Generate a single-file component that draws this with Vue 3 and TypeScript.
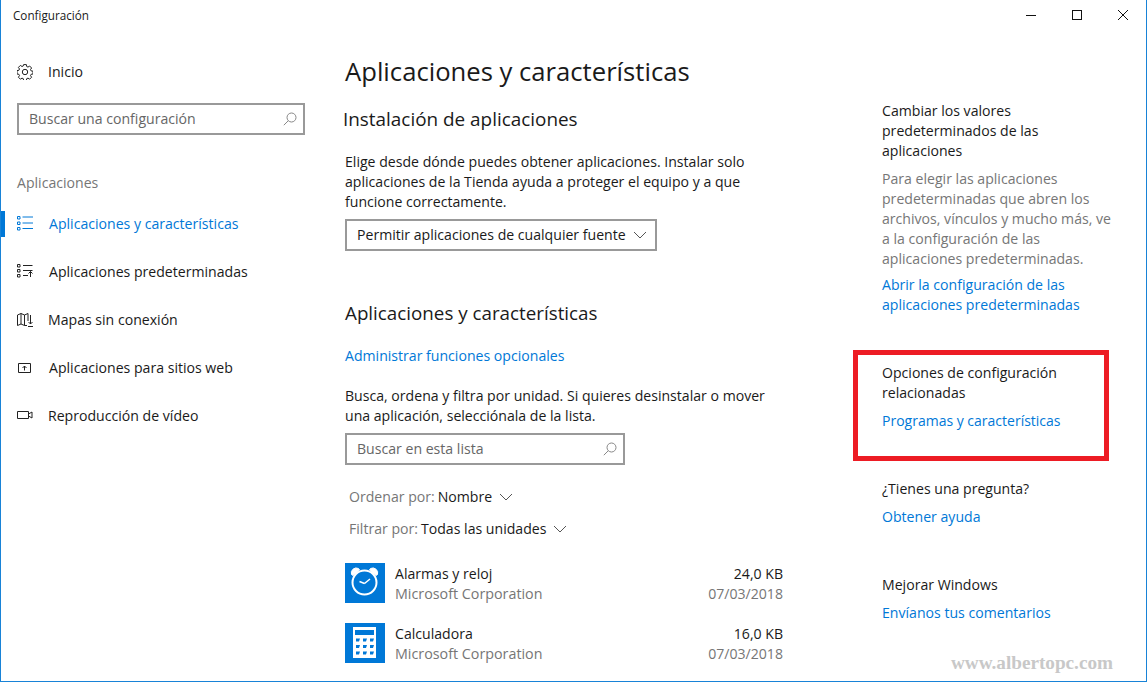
<script setup lang="ts">
const nav = [
  { label: 'Aplicaciones y características', icon: 'list', active: true, gap: 'wide' },
  { label: 'Aplicaciones predeterminadas', icon: 'defaults', active: false, gap: 'wide' },
  { label: 'Mapas sin conexión', icon: 'map', active: false, gap: 'narrow' },
  { label: 'Aplicaciones para sitios web', icon: 'web', active: false, gap: 'wide' },
  { label: 'Reproducción de vídeo', icon: 'video', active: false, gap: 'narrow' },
]
const apps = [
  { name: 'Alarmas y reloj', size: '24,0 KB', icon: 'clock' },
  { name: 'Calculadora', size: '16,0 KB', icon: 'calc' },
]
</script>

<template>
  <div class="window">
    <header class="titlebar">
      <span class="title">Configuración</span>
      <div class="controls">
        <svg width="12" height="12" viewBox="0 0 12 12" class="c1"><path d="M1 6.500h10" stroke="#111" fill="none" /></svg>
        <svg width="12" height="12" viewBox="0 0 12 12" class="c2"><rect x="1.500" y="1.500" width="9" height="9" stroke="#111" fill="none" /></svg>
        <svg width="12" height="12" viewBox="0 0 12 12" class="c3"><path d="M1 1l10 10M11 1L1 11" stroke="#111" fill="none" /></svg>
      </div>
    </header>

    <div class="body">
      <aside class="sidebar">
        <div class="home">
          <svg class="ico" width="16" height="16" viewBox="0 0 16 16" fill="none" stroke="#222" stroke-width="1">
            <circle cx="8" cy="8" r="2.700" />
            <path d="M6.600.6h2.800l.3 1.900 1.300.6 1.600-1.100 2 2-1.100 1.600.6 1.300 1.900.3v2.800l-1.900.3-.6 1.300 1.100 1.600-2 2-1.600-1.100-1.300.6-.3 1.900H6.600l-.3-1.900-1.300-.6-1.600 1.100-2-2 1.100-1.600-.6-1.300-1.900-.3V6.600l1.900-.3.6-1.300-1.100-1.600 2-2 1.600 1.100 1.300-.6z" />
          </svg>
          <span>Inicio</span>
        </div>
        <div class="search side-search">
          <span>Buscar una configuración</span>
          <svg width="14" height="14" viewBox="0 0 14 14" fill="none" stroke="#888"><circle cx="8.500" cy="5.500" r="4.500" /><path d="M5.200 8.800L.8 13.200" /></svg>
        </div>
        <div class="group">Aplicaciones</div>
        <nav class="nav">
          <div v-for="n in nav" :key="n.label" class="nav-row" :class="[{ active: n.active }, n.gap]">
            <svg class="nav-ico" width="16" height="16" viewBox="0 0 16 16" fill="none" :stroke="n.active ? '#0078d7' : '#222'">
              <template v-if="n.icon === 'list'">
                <path d="M.5.5h2.500V3H.5zM.5 6h2.500v2.500H.5zM.5 11.500h2.500V14H.5zM5.500 1h10.500M5.500 7h10.500M5.500 12.500h10.500" />
              </template>
              <template v-else-if="n.icon === 'defaults'">
                <path d="M.5.5h2.500V3H.5zM.5 5.500h2.500V8H.5zM.5 10.500h2.500V13H.5zM6 1.500h9.500M6 6.500h9.500M6 11.500h5M13.500 13V7.500M11.500 9.500l2-2 2 2" />
              </template>
              <template v-else-if="n.icon === 'map'">
                <path d="M.5 3l3.500-1.500L7.500 3 11 1.500V9M.5 3v10.500L4 12l3.500 1.500H10M4 1.500V12M7.500 3v10.500M13.500 3v9M11.500 10l2 2 2-2M11 14.500h5" />
              </template>
              <template v-else-if="n.icon === 'web'">
                <path d="M1.500 3.500h12v9h-12zM7.500 10.500V6M5.500 8l2-2 2 2" />
              </template>
              <template v-else>
                <path d="M.5 3.500h11v7H.5zM11.500 6l3.500-2v6l-3.500-2" />
              </template>
            </svg>
            <span>{{ n.label }}</span>
          </div>
        </nav>
      </aside>

      <main class="main">
        <h1>Aplicaciones y características</h1>
        <h2 class="install">Instalación de aplicaciones</h2>
        <p class="p1">Elige desde dónde puedes obtener aplicaciones. Instalar solo aplicaciones de la Tienda ayuda a proteger el equipo y a que funcione correctamente.</p>
        <div class="select">
          <span>Permitir aplicaciones de cualquier fuente</span>
          <svg width="14" height="8" viewBox="0 0 14 8" fill="none" stroke="#555"><path d="M1 1l6 6 6-6" /></svg>
        </div>
        <h2 class="features">Aplicaciones y características</h2>
        <a class="link manage">Administrar funciones opcionales</a>
        <p class="p2">Busca, ordena y filtra por unidad. Si quieres desinstalar o mover una aplicación, selecciónala de la lista.</p>
        <div class="search list-search">
          <span>Buscar en esta lista</span>
          <svg width="14" height="14" viewBox="0 0 14 14" fill="none" stroke="#888"><circle cx="8.500" cy="5.500" r="4.500" /><path d="M5.200 8.800L.8 13.200" /></svg>
        </div>
        <div class="filter order">
          <span class="muted">Ordenar por:</span> <span>Nombre</span>
          <svg width="14" height="8" viewBox="0 0 14 8" fill="none" stroke="#555"><path d="M1 1l6 6 6-6" /></svg>
        </div>
        <div class="filter by">
          <span class="muted">Filtrar por:</span> <span>Todas las unidades</span>
          <svg width="14" height="8" viewBox="0 0 14 8" fill="none" stroke="#555"><path d="M1 1l6 6 6-6" /></svg>
        </div>
        <div class="apps">
          <div v-for="a in apps" :key="a.name" class="app">
            <div class="app-icon">
              <svg v-if="a.icon === 'clock'" width="40" height="40" viewBox="0 0 40 40" fill="none" stroke="#fff">
                <circle cx="19.500" cy="19.500" r="12" stroke-width="2" />
                <path d="M6.500 11.500a5 5 0 0 1 7-6l1 1.500-6.500 5.500zM32.500 11.500a5 5 0 0 0-7-6l-1 1.500 6.500 5.500z" fill="#fff" />
                <path d="M19.500 20.500l5.500-4.500M19.500 20.500l-5-2" stroke-width="1.500" />
              </svg>
              <svg v-else width="40" height="40" viewBox="0 0 40 40">
                <path fill-rule="evenodd" fill="#fff" d="M8 4h23v31H8zM10 7v5h19V7zM11 15.500v3h3l1-3zM18 15.500v3h3l1-3zM25 15.500v3h3l1-3zM11 22v3h3l1-3zM18 22v3h3l1-3zM25 22v3h3l1-3zM11 28.500v3h3l1-3zM18 28.500v3h3l1-3zM25 28.500v3h3l1-3z" />
              </svg>
            </div>
            <div class="app-text">
              <div>{{ a.name }}</div>
              <div class="muted company">Microsoft Corporation</div>
            </div>
            <div class="app-meta">
              <div>{{ a.size }}</div>
              <div class="muted">07/03/2018</div>
            </div>
          </div>
        </div>
      </main>

      <aside class="right">
        <section class="defaults">
          <div class="narrow-head">Cambiar los valores predeterminados de las aplicaciones</div>
          <p class="muted">Para elegir las aplicaciones predeterminadas que abren los archivos, vínculos y mucho más, ve a la configuración de las aplicaciones predeterminadas.</p>
          <a class="link">Abrir la configuración de las aplicaciones predeterminadas</a>
        </section>
        <section class="related">
          <div>Opciones de configuración relacionadas</div>
          <a class="link">Programas y características</a>
          <div class="highlight"></div>
        </section>
        <section class="question">
          <div>¿Tienes una pregunta?</div>
          <a class="link">Obtener ayuda</a>
        </section>
        <section class="improve">
          <div>Mejorar Windows</div>
          <a class="link">Envíanos tus comentarios</a>
        </section>
      </aside>
    </div>
    <div class="watermark">www.albertopc.com</div>
  </div>
</template>

<style>
html, body { margin: 0; padding: 0; background: #fff; overflow: hidden; }
</style>

<style scoped>
.window {
  position: relative;
  box-sizing: border-box;
  width: 1147px;
  height: 682px;
  border: 1px solid #1883d7;
  border-top: 0;
  overflow: hidden;
  background: #fff;
  color: #1a1a1a;
  font-family: "Open Sans", "Noto Sans", sans-serif;
  font-size: 14.100px;
  line-height: 20px;
}
.titlebar { height: 30px; display: flex; align-items: center; justify-content: space-between; }
.title { font-size: 11.700px; margin-left: 12px; }
.controls { display: flex; align-items: center; margin-right: 17px; }
.c2 { margin-left: 34px; }
.c3 { margin-left: 34px; }
.body { display: flex; height: 651px; }
.sidebar { width: 344px; flex: none; }
.home { display: flex; align-items: center; height: 24px; margin: 30px 0 0 16px; }
.home span { margin-left: 15px; }
.ico { flex: none; }
.search {
  box-sizing: border-box;
  display: flex;
  align-items: center;
  justify-content: space-between;
  height: 32px;
  border: 2px solid #999;
  padding: 0 6px 0 10px;
  color: #666;
}
.side-search { width: 288px; margin: 19px 0 0 16px; }
.group { margin: 38px 0 0 16px; color: #767676; }
.nav { margin-top: 7px; }
.nav-row { position: relative; display: flex; align-items: center; height: 48px; padding-left: 16px; }
.nav-row.wide span { margin-left: 16px; }
.nav-row.narrow span { margin-left: 15px; }
.nav-ico { flex: none; }
.nav-row.active { color: #0078d7; }
.nav-row.active::before {
  content: "";
  position: absolute;
  left: 0;
  top: 11px;
  width: 4px;
  height: 26px;
  background: #0078d7;
}
.main { width: 438px; flex: none; }
h1 { margin: 22px 0 0; font-size: 25.650px; line-height: 40px; font-weight: 400; }
h2 { margin: 0; font-weight: 400; font-size: 18.800px; line-height: 28px; }
.install { margin: 13px 0 0 -2px; font-size: 18.900px; }
.p1 { margin: 19px 0 0; width: 430px; }
.select {
  box-sizing: border-box;
  display: flex;
  align-items: center;
  justify-content: space-between;
  width: 312px;
  height: 32px;
  margin-top: 7px;
  border: 2px solid #999;
  padding: 0 8px 0 10px;
}
.features { margin-top: 48px; }
.link { color: #0078d7; display: block; }
.manage { margin-top: 19px; }
.p2 { margin: 20px 0 0; width: 440px; }
.list-search { width: 280px; margin-top: 7px; }
.filter { display: flex; align-items: center; gap: 3px; margin-left: 4px; height: 20px; }
.filter svg { margin-left: 4px; }
.order { margin-top: 22px; }
.by { margin-top: 12px; }
.muted { color: #767676; }
.apps { margin-top: 24px; display: flex; flex-direction: column; gap: 20px; }
.app { display: flex; height: 40px; }
.app-icon { width: 40px; height: 40px; background: #0078d7; flex: none; }
.app-text { margin-left: 10px; flex: 1; padding-top: 1px; }
.company { font-size: 14.300px; }
.app-meta { text-align: right; padding-top: 1px; }
.right { margin-left: 99px; width: 232px; }
.right section { position: relative; }
.narrow-head { width: 200px; }
.defaults { margin-top: 71px; }
.defaults p { margin: 8px 0 6px; }
.related { margin-top: 48px; }
.related .link { margin-top: 8px; font-size: 14px; }
.highlight {
  position: absolute;
  left: -29px;
  top: -13px;
  width: 256px;
  height: 111px;
  box-sizing: border-box;
  border: 5px solid #ed1c24;
}
.question { margin-top: 48px; }
.question .link, .improve .link { margin-top: 8px; }
.improve { margin-top: 48px; }
.watermark {
  position: absolute;
  right: 33px;
  bottom: 8px;
  font-family: "Liberation Serif", serif;
  font-weight: 700;
  font-size: 19.200px;
  color: #c8c8c8;
}
</style>
